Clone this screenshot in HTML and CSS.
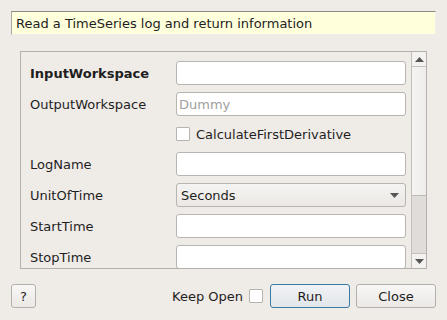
FILE: index.html
```html
<!DOCTYPE html>
<html>
<head>
<meta charset="utf-8">
<link rel="stylesheet" href="styles.css">
</head>
<body>
<div class="dialog">
  <div class="desc">Read a TimeSeries log and return information</div>
  <div class="scroll">
    <div class="props">
      <div class="label bold">InputWorkspace</div>
      <div class="input"></div>
      <div class="label">OutputWorkspace</div>
      <div class="input placeholder">Dummy</div>
      <div class="label"></div>
      <div class="check-row"><span class="box"></span><span>CalculateFirstDerivative</span></div>
      <div class="label">LogName</div>
      <div class="input"></div>
      <div class="label">UnitOfTime</div>
      <div class="combo"><span>Seconds</span><svg width="9" height="5" viewBox="0 0 9 5"><path d="M0 0H9L4.5 5Z" fill="#555"/></svg></div>
      <div class="label">StartTime</div>
      <div class="input"></div>
      <div class="label">StopTime</div>
      <div class="input"></div>
    </div>
    <div class="vbar">
      <div class="arrow"><svg width="9" height="5" viewBox="0 0 9 5"><path d="M0 5H9L4.5 0Z" fill="#555"/></svg></div>
      <div class="handle"></div>
      <div class="track"></div>
      <div class="arrow down"><svg width="9" height="5" viewBox="0 0 9 5"><path d="M0 0H9L4.5 5Z" fill="#555"/></svg></div>
    </div>
  </div>
  <div class="footer">
    <button class="btn help">?</button>
    <div class="spacer"></div>
    <span class="keep">Keep Open</span>
    <span class="box keepbox"></span>
    <button class="btn run">Run</button>
    <button class="btn close">Close</button>
  </div>
</div>
</body>
</html>
```

FILE: styles.css
```css
html, body {
  margin: 0;
  padding: 0;
  background: #efebe7;
}
body {
  font-family: "DejaVu Sans", sans-serif;
  font-size: 13px;
  color: #1e1e1e;
  width: 447px;
  height: 320px;
  overflow: hidden;
}
.dialog {
  display: flex;
  flex-direction: column;
  padding: 11px 11px 0 11px;
}
.desc {
  box-sizing: border-box;
  height: 24px;
  background: #ffffdc;
  border-top: 1px solid #8c8a88;
  border-left: 1px solid #a8a6a4;
  border-right: 1px solid #f0eee8;
  border-bottom: 1px solid #f0eee8;
  padding: 0 4px;
  display: flex;
  align-items: center;
}
.scroll {
  box-sizing: border-box;
  margin: 16px 9px 0 9px;
  height: 218px;
  border: 1px solid #b4b0ac;
  display: flex;
  overflow: hidden;
}
.props {
  flex: 1;
  display: grid;
  grid-template-columns: 146px 230px;
  grid-template-rows: 24px 24px 22px 24px 24px 24px 24px;
  row-gap: 7px;
  padding: 9px 0 0 9px;
  align-content: start;
}
.label {
  display: flex;
  align-items: center;
  white-space: nowrap;
}
.bold { font-weight: bold; }
.input {
  box-sizing: border-box;
  height: 24px;
  background: #fff;
  border: 1px solid #b8b4b0;
  border-radius: 3px;
  display: flex;
  align-items: center;
  padding-left: 2px;
}
.placeholder { color: #a0a0a0; }
.check-row {
  display: flex;
  align-items: center;
  gap: 6px;
}
.box {
  display: inline-block;
  box-sizing: border-box;
  width: 14px;
  height: 14px;
  background: #fff;
  border: 1px solid #b8b4b0;
  border-radius: 1px;
}
.combo {
  box-sizing: border-box;
  height: 24px;
  border: 1px solid #b8b4b0;
  border-radius: 3px;
  background: linear-gradient(#f6f4f2, #ebe8e5);
  display: flex;
  align-items: center;
  justify-content: space-between;
  padding: 0 6px 0 4px;
}
.vbar {
  width: 14px;
  border-left: 1px solid #c4c0bc;
  display: flex;
  flex-direction: column;
  background: #dfdcd9;
}
.arrow {
  height: 14px;
  display: flex;
  align-items: center;
  justify-content: center;
  background: #f4f2f0;
  border-bottom: 1px solid #c4c0bc;
}
.arrow.down {
  border-bottom: none;
  border-top: 1px solid #c4c0bc;
}
.handle {
  height: 128px;
  background: linear-gradient(90deg, #f6f4f2, #efedeb);
  border-bottom: 1px solid #bcb8b4;
}
.track { flex: 1; }
.footer {
  display: flex;
  align-items: center;
  margin-top: 15px;
  height: 24px;
}
.spacer { flex: 1; }
.btn {
  font-family: "DejaVu Sans", sans-serif;
  font-size: 13px;
  color: #1e1e1e;
  box-sizing: border-box;
  height: 24px;
  border: 1px solid #b4b0ac;
  border-radius: 3px;
  background: linear-gradient(#f8f7f6, #ebe8e5);
  padding: 0;
}
.help { width: 25px; }
.keep { margin-right: 6px; }
.keepbox { margin-right: 7px; }
.run {
  width: 80px;
  border-color: #3a7aa6;
  background: linear-gradient(#f0f2f4, #e2e6ea);
  margin-right: 6px;
}
.close { width: 80px; }
```
